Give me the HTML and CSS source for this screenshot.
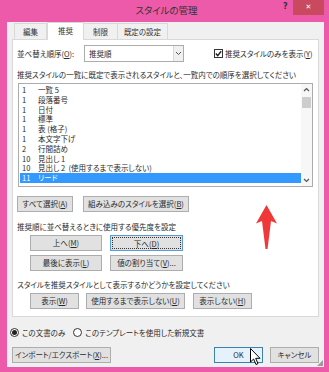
FILE: index.html
```html
<!DOCTYPE html>
<html lang="ja">
<head>
<meta charset="utf-8">
<title>スタイルの管理</title>
<link rel="stylesheet" href="styles.css">
</head>
<body>
<div class="window">
  <div class="titlebar">
    <span class="title">スタイルの管理</span>
    <span class="help">?</span>
    <span class="close">✕</span>
  </div>
  <div class="client">
    <div class="tabs">
      <div class="tab t1">編集</div>
      <div class="tab t2 active">推奨</div>
      <div class="tab t3">制限</div>
      <div class="tab t4">既定の設定</div>
    </div>
    <div class="panel">
      <div class="row1">
        <span class="lbl">並べ替え順序(<u>O</u>):</span>
        <div class="select">
          <span class="sel-text">推奨順</span>
          <span class="drop"><svg width="7" height="5" viewBox="0 0 7 5"><path d="M1 1 L3.5 3.5 L6 1" fill="none" stroke="#555" stroke-width="1"/></svg></span>
        </div>
        <span class="check"><span class="box"><svg width="7" height="7" viewBox="0 0 7 7"><path d="M0.8 3.6 L2.7 5.6 L6.2 1.2" fill="none" stroke="#222" stroke-width="1.4"/></svg></span>推奨スタイルのみを表示(<u>Y</u>)</span>
      </div>
      <div class="text desc">推奨スタイルの一覧に既定で表示されるスタイルと、一覧内での順序を選択してください</div>
      <div class="listbox">
        <div class="items">
          <div class="item"><span class="num">1</span><span>一覧 5</span></div>
          <div class="item"><span class="num">1</span><span>段落番号</span></div>
          <div class="item"><span class="num">1</span><span>日付</span></div>
          <div class="item"><span class="num">1</span><span>標準</span></div>
          <div class="item"><span class="num">1</span><span>表 (格子)</span></div>
          <div class="item"><span class="num">1</span><span>本文字下げ</span></div>
          <div class="item"><span class="num">2</span><span>行間詰め</span></div>
          <div class="item"><span class="num">10</span><span>見出し 1</span></div>
          <div class="item"><span class="num">10</span><span>見出し 2 &nbsp;(使用するまで表示しない)</span></div>
          <div class="item selected"><span class="num">11</span><span>リード</span></div>
        </div>
        <div class="scrollbar">
          <span class="sb-arrow"><svg width="7" height="5" viewBox="0 0 7 5"><path d="M1 4 L3.5 1.5 L6 4" fill="none" stroke="#555" stroke-width="1.2"/></svg></span>
          <span class="thumb"></span>
          <span class="sb-space"></span>
          <span class="sb-arrow"><svg width="7" height="5" viewBox="0 0 7 5"><path d="M1 1 L3.5 3.5 L6 1" fill="none" stroke="#555" stroke-width="1.2"/></svg></span>
        </div>
      </div>
      <div class="btnrow r-select">
        <button class="btn w56">すべて選択(<u>A</u>)</button>
        <button class="btn w106">組み込みのスタイルを選択(<u>B</u>)</button>
      </div>
      <div class="text t-prio">推奨順に並べ替えるときに使用する優先度を設定</div>
      <div class="btnrow r-move1">
        <button class="btn w72">上へ(<u>M</u>)</button>
        <button class="btn w73 focus"><span class="dotted">下へ(<u>D</u>)</span></button>
      </div>
      <div class="btnrow r-move2">
        <button class="btn w72">最後に表示(<u>L</u>)</button>
        <button class="btn w73">値の割り当て(<u>V</u>)...</button>
      </div>
      <div class="text t-show">スタイルを推奨スタイルとして表示するかどうかを設定してください</div>
      <div class="btnrow r-show">
        <button class="btn w49">表示(<u>W</u>)</button>
        <button class="btn w99">使用するまで表示しない(<u>U</u>)</button>
        <button class="btn w59">表示しない(<u>H</u>)</button>
      </div>
    </div>
    <div class="radios">
      <span class="radio on"></span><span class="rlabel">この文書のみ</span>
      <span class="radio"></span><span class="rlabel">このテンプレートを使用した新規文書</span>
    </div>
    <div class="bottom">
      <button class="btn w99">インポート/エクスポート(<u>X</u>)...</button>
      <span class="spacer"></span>
      <button class="btn w49 default">OK</button>
      <button class="btn w49">キャンセル</button>
    </div>
    <span class="grip"></span>
  </div>
  <svg class="arrow" width="21" height="45" viewBox="0 0 21 45"><path d="M10.5 0 L21 18.5 L15 16 L11.5 44 L9.5 44 L6 16 L0 18.5 Z" fill="#f03838"/></svg>
  <svg class="cursor" width="12" height="18" viewBox="0 0 12 18"><path d="M0.5 0.5 L0.5 14 L3.6 11 L6 16.5 L8 15.6 L5.7 10.3 L10 10.3 Z" fill="#fff" stroke="#000" stroke-width="1"/></svg>
</div>
</body>
</html>
```

FILE: styles.css
```css
* { box-sizing: border-box; }
html, body {
  margin: 0;
  padding: 0;
  background: #ec5aa9;
}
body {
  font-family: "Noto Sans CJK JP", "Noto Sans", sans-serif;
  font-size: 7.5px;
  color: #2a2a2a;
  font-feature-settings: "palt";
}
.window {
  position: relative;
  width: 329px;
  height: 372px;
  background: #ec5aa9;
  display: flex;
  flex-direction: column;
}
.titlebar {
  position: relative;
  height: 22px;
  flex: none;
}
.title {
  position: absolute;
  left: 0;
  right: 0;
  top: 3px;
  text-align: center;
  font-size: 9.5px;
  line-height: 14px;
  color: #333;
  padding-left: 4px;
}
.help {
  position: absolute;
  left: 283px;
  top: 2px;
  font-family: "DejaVu Sans", sans-serif;
  font-weight: bold;
  font-size: 8px;
  color: #333;
}
.close {
  position: absolute;
  left: 293px;
  top: 0;
  width: 31px;
  height: 15px;
  background: #c9495f;
  color: #fff;
  font-family: "DejaVu Sans", sans-serif;
  font-size: 7px;
  line-height: 15px;
  text-align: center;
}
.client {
  position: relative;
  flex: 1;
  margin: 0 5px 5px 7px;
  background: #f0f0f0;
  display: flex;
  flex-direction: column;
}
.tabs {
  display: flex;
  align-items: flex-end;
  height: 17px;
  margin-left: 7px;
  position: relative;
  z-index: 1;
}
.tab {
  height: 16px;
  background: #f0f0f0;
  border: 1px solid #d9d9d9;
  border-bottom: none;
  text-align: center;
  line-height: 15px;
  font-size: 7.5px;
  color: #333;
}
.tab + .tab { border-left: none; }
.t1 { width: 33px; }
.t2 { width: 37px; }
.t3 { width: 34px; }
.t4 { width: 50px; }
.tab.active {
  height: 18px;
  background: #fff;
  border-left: 1px solid #d9d9d9;
  margin-bottom: -1px;
  line-height: 16px;
}
.tab.active + .tab { border-left: none; }
.panel {
  margin: 0 5px 0 5px;
  background: #fff;
  border: 1px solid #d9d9d9;
  padding: 5px 5px 7px 4px;
  display: flex;
  flex-direction: column;
}
.row1 {
  display: flex;
  align-items: center;
  height: 17px;
  white-space: nowrap;
}
.lbl {
  width: 67px;
  flex: none;
}
.select {
  width: 100px;
  height: 17px;
  border: 1px solid #acacac;
  display: flex;
  align-items: center;
  background: #fff;
  flex: none;
}
.sel-text {
  flex: 1;
  padding-left: 4px;
}
.drop {
  width: 10px;
  height: 15px;
  border-left: 1px solid #d9d9d9;
  background: #f0f0f0;
  display: flex;
  align-items: center;
  justify-content: center;
}
.check {
  display: flex;
  align-items: center;
  margin-left: 30px;
}
.box {
  width: 9px;
  height: 9px;
  border: 1px solid #333;
  background: #fff;
  display: flex;
  align-items: center;
  justify-content: center;
  margin-right: 2px;
}
.text {
  line-height: 12px;
  white-space: nowrap;
}
.desc { margin-top: 7px; }
.listbox {
  margin-top: 2px;
  margin-left: 1px;
  width: 295px;
  height: 104px;
  border: 1px solid #acacac;
  display: flex;
}
.items {
  flex: 1;
  padding-top: 1px;
  padding-left: 1px;
}
.item {
  height: 9.8px;
  line-height: 9.8px;
  display: flex;
  padding-left: 2px;
  white-space: pre;
}
.num {
  width: 16px;
  flex: none;
}
.item.selected {
  background: #3399ff;
  color: #fff;
}
.scrollbar {
  width: 11px;
  display: flex;
  flex-direction: column;
  align-items: center;
  background: #f7f7f7;
}
.sb-arrow {
  height: 11px;
  display: flex;
  align-items: center;
  justify-content: center;
}
.thumb {
  width: 9px;
  height: 11px;
  background: #cdcdcd;
  margin-top: 2px;
}
.sb-space { flex: 1; }
.btnrow {
  display: flex;
}
.btn {
  height: 16px;
  background: #e1e1e1;
  border: 1px solid #adadad;
  font-family: inherit;
  font-size: 7.5px;
  color: #2a2a2a;
  padding: 0;
  line-height: 14px;
  text-align: center;
  white-space: nowrap;
  font-feature-settings: "palt";
}
.btn u, .lbl u, .check u { text-underline-offset: 1px; }
.w49 { width: 49px; }
.w56 { width: 56px; }
.w59 { width: 59px; }
.w72 { width: 72px; }
.w73 { width: 73px; }
.w99 { width: 99px; }
.w106 { width: 106px; }
.r-select { margin-top: 9px; gap: 10px; }
.t-prio { margin-top: 9px; }
.r-move1 { margin-top: 2px; margin-left: 13px; gap: 8px; }
.r-move2 { margin-top: 4px; margin-left: 13px; gap: 8px; }
.t-show { margin-top: 8px; }
.r-show { margin-top: 2px; margin-left: 13px; gap: 7px; }
.r-show .w59 { margin-left: 1px; }
.btn.focus {
  border-color: #5b9bd5;
  padding: 1px;
}
.dotted {
  display: block;
  height: 12px;
  line-height: 11px;
  border: 1px dotted #333;
}
.btn.default {
  background: #e5f1fb;
  border-color: #3c7fb1;
}
.radios {
  display: flex;
  align-items: center;
  height: 14px;
  margin-top: 8px;
  margin-left: 3px;
}
.radio {
  width: 9px;
  height: 9px;
  border: 1px solid #333;
  border-radius: 50%;
  background: #fff;
  display: flex;
  align-items: center;
  justify-content: center;
  margin-right: 3px;
}
.radio.on::after {
  content: "";
  width: 5px;
  height: 5px;
  border-radius: 50%;
  background: #222;
}
.rlabel { margin-right: 8px; }
.bottom {
  display: flex;
  margin-top: 8px;
  margin-left: 5px;
  margin-right: 5px;
  gap: 7px;
}
.spacer { flex: 1; }
.grip {
  position: absolute;
  right: 1px;
  bottom: 1px;
  width: 6px;
  height: 6px;
  background:
    radial-gradient(circle, #999 0.7px, transparent 1px) 0 0 / 2px 2px;
  clip-path: polygon(100% 0, 100% 100%, 0 100%);
}
.arrow {
  position: absolute;
  left: 256px;
  top: 205px;
}
.cursor {
  position: absolute;
  left: 250px;
  top: 348px;
}
```
